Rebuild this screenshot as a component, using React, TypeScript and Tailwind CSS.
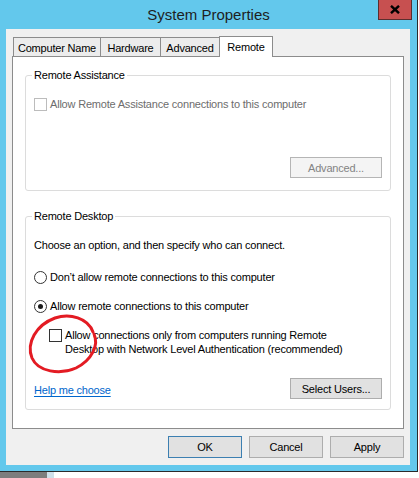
import React from "react";

function Checkbox({ disabled }: { disabled?: boolean }) {
  return (
    <span
      className={
        "inline-block shrink-0 w-[13px] h-[13px] border bg-white " +
        (disabled ? "border-[#bcbcbc]" : "border-[#333333]")
      }
    />
  );
}

function Radio({ checked }: { checked?: boolean }) {
  return (
    <span className="shrink-0 w-[13px] h-[13px] rounded-full border border-[#333333] bg-white flex items-center justify-center">
      {checked ? <span className="w-[5px] h-[5px] rounded-full bg-[#1a1a1a]" /> : null}
    </span>
  );
}

function Tab({ children, w, first }: { children: React.ReactNode; w: string; first?: boolean }) {
  return (
    <div
      className={
        "h-[19px] mb-[1px] border border-b-0 border-[#8c8c8c] bg-[#ececec] flex items-center justify-center pt-[2px] " +
        w +
        (first ? "" : " -ml-px")
      }
    >
      {children}
    </div>
  );
}

export default function App() {
  return (
    <div className="w-[419px] h-[478px] overflow-hidden bg-white flex flex-col font-['Liberation_Sans',Arial,sans-serif] text-[11px] tracking-[-0.2px] leading-[14px] text-black">
      <div className="w-[418px] h-[472px] shrink-0 bg-[#63c8ec] border-r border-b border-[#2b2b2b] flex flex-col">
        {/* title bar */}
        <div className="h-[29px] shrink-0 relative flex items-center justify-center">
          <span className="text-[15px] tracking-normal leading-[18px] text-[#1e1e1e]">System Properties</span>
          <div className="absolute left-[378px] top-0 w-[34px] h-[20px] bg-[#c75050] border-l border-r border-b border-[#5b2e2e] flex items-center justify-center">
            <svg width="10" height="9" viewBox="0 0 10 9">
              <path d="M1 0.8 L9 8.2 M9 0.8 L1 8.2" stroke="#000" strokeWidth="2.4" strokeLinecap="butt" />
            </svg>
          </div>
        </div>
        {/* body */}
        <div className="ml-[6px] mr-[7px] h-[436px] shrink-0 bg-[#f0f0f0] px-[6px] pt-[7px] flex flex-col">
          {/* tabs */}
          <div className="flex items-end h-[21px] pl-[1px] relative z-10 -mb-px">
            <Tab w="w-[88px]" first>Computer Name</Tab>
            <Tab w="w-[61px]">Hardware</Tab>
            <Tab w="w-[60px]">Advanced</Tab>
            <div className="w-[54px] h-[21px] -ml-px border border-b-0 border-[#8c8c8c] bg-white flex items-center justify-center">
              Remote
            </div>
          </div>
          {/* panel */}
          <div className="h-[373px] shrink-0 border border-[#8c8c8c] bg-white px-[12px] pt-[11px]">
            <fieldset className="border border-[#dcdcdc] rounded-[3px] pl-[8px] pr-[8px] pb-[12px]">
              <legend className="px-[2px] -ml-[2px] leading-[14px]">Remote Assistance</legend>
              <div className="pt-[15px] flex items-center gap-[3px] text-[#6d6d6d]">
                <Checkbox disabled />
                <span>Allow Remote Assistance connections to this computer</span>
              </div>
              <div className="mt-[46px] flex justify-end">
                <div className="w-[92px] h-[21px] border border-[#b5b5b5] bg-[#f4f4f4] text-[#838383] flex items-center justify-center">
                  Advanced...
                </div>
              </div>
            </fieldset>

            <fieldset className="mt-[18px] border border-[#dcdcdc] rounded-[3px] pl-[8px] pr-[8px] pb-[10px]">
              <legend className="px-[2px] -ml-[2px] leading-[14px]">Remote Desktop</legend>
              <div className="pt-[15px]">Choose an option, and then specify who can connect.</div>
              <div className="mt-[18px] flex items-center gap-[3px]">
                <Radio />
                <span>Don’t allow remote connections to this computer</span>
              </div>
              <div className="mt-[15px] flex items-center gap-[3px]">
                <Radio checked />
                <span>Allow remote connections to this computer</span>
              </div>
              <div className="mt-[15px] ml-[15px] flex items-start gap-[3px]">
                <span className="mt-[1px] flex">
                  <Checkbox />
                </span>
                <span>
                  Allow connections only from computers running Remote
                  <br />
                  Desktop with Network Level Authentication (recommended)
                </span>
              </div>
              <div className="mt-[22px] flex items-center justify-between">
                <span className="mt-[3px] text-[#0066cc] underline underline-offset-[2px]">Help me choose</span>
                <div className="w-[92px] h-[21px] border border-[#adadad] bg-[#e1e1e1] flex items-center justify-center">
                  Select Users...
                </div>
              </div>
            </fieldset>
          </div>
          {/* buttons */}
          <div className="mt-[7px] flex justify-end gap-[7px]">
            <div className="w-[74px] h-[22px] border border-[#3c7fb1] bg-[#e1e1e1] flex items-center justify-center">OK</div>
            <div className="w-[74px] h-[22px] border border-[#adadad] bg-[#e1e1e1] flex items-center justify-center">Cancel</div>
            <div className="w-[74px] h-[22px] border border-[#adadad] bg-[#e1e1e1] flex items-center justify-center">Apply</div>
          </div>
        </div>
      </div>
      {/* strip below window */}
      <div className="flex h-[6px]">
        <div className="w-[47px] bg-[#7d7d7d]" />
        <div className="w-[7px] bg-[#cfe0ea]" />
        <div className="flex-1 bg-white" />
      </div>
      {/* red hand-drawn ellipse */}
      <svg className="absolute left-0 top-0 pointer-events-none" width="419" height="478" viewBox="0 0 419 478">
        <path
          d="M93 332 C 88 318, 70 313, 55 318 C 36 325, 26 343, 32 358 C 38 372, 60 375, 76 368 C 92 360, 99 345, 94 334"
          fill="none"
          stroke="#e31b23"
          strokeWidth="3"
          strokeLinecap="round"
        />
      </svg>
    </div>
  );
}
